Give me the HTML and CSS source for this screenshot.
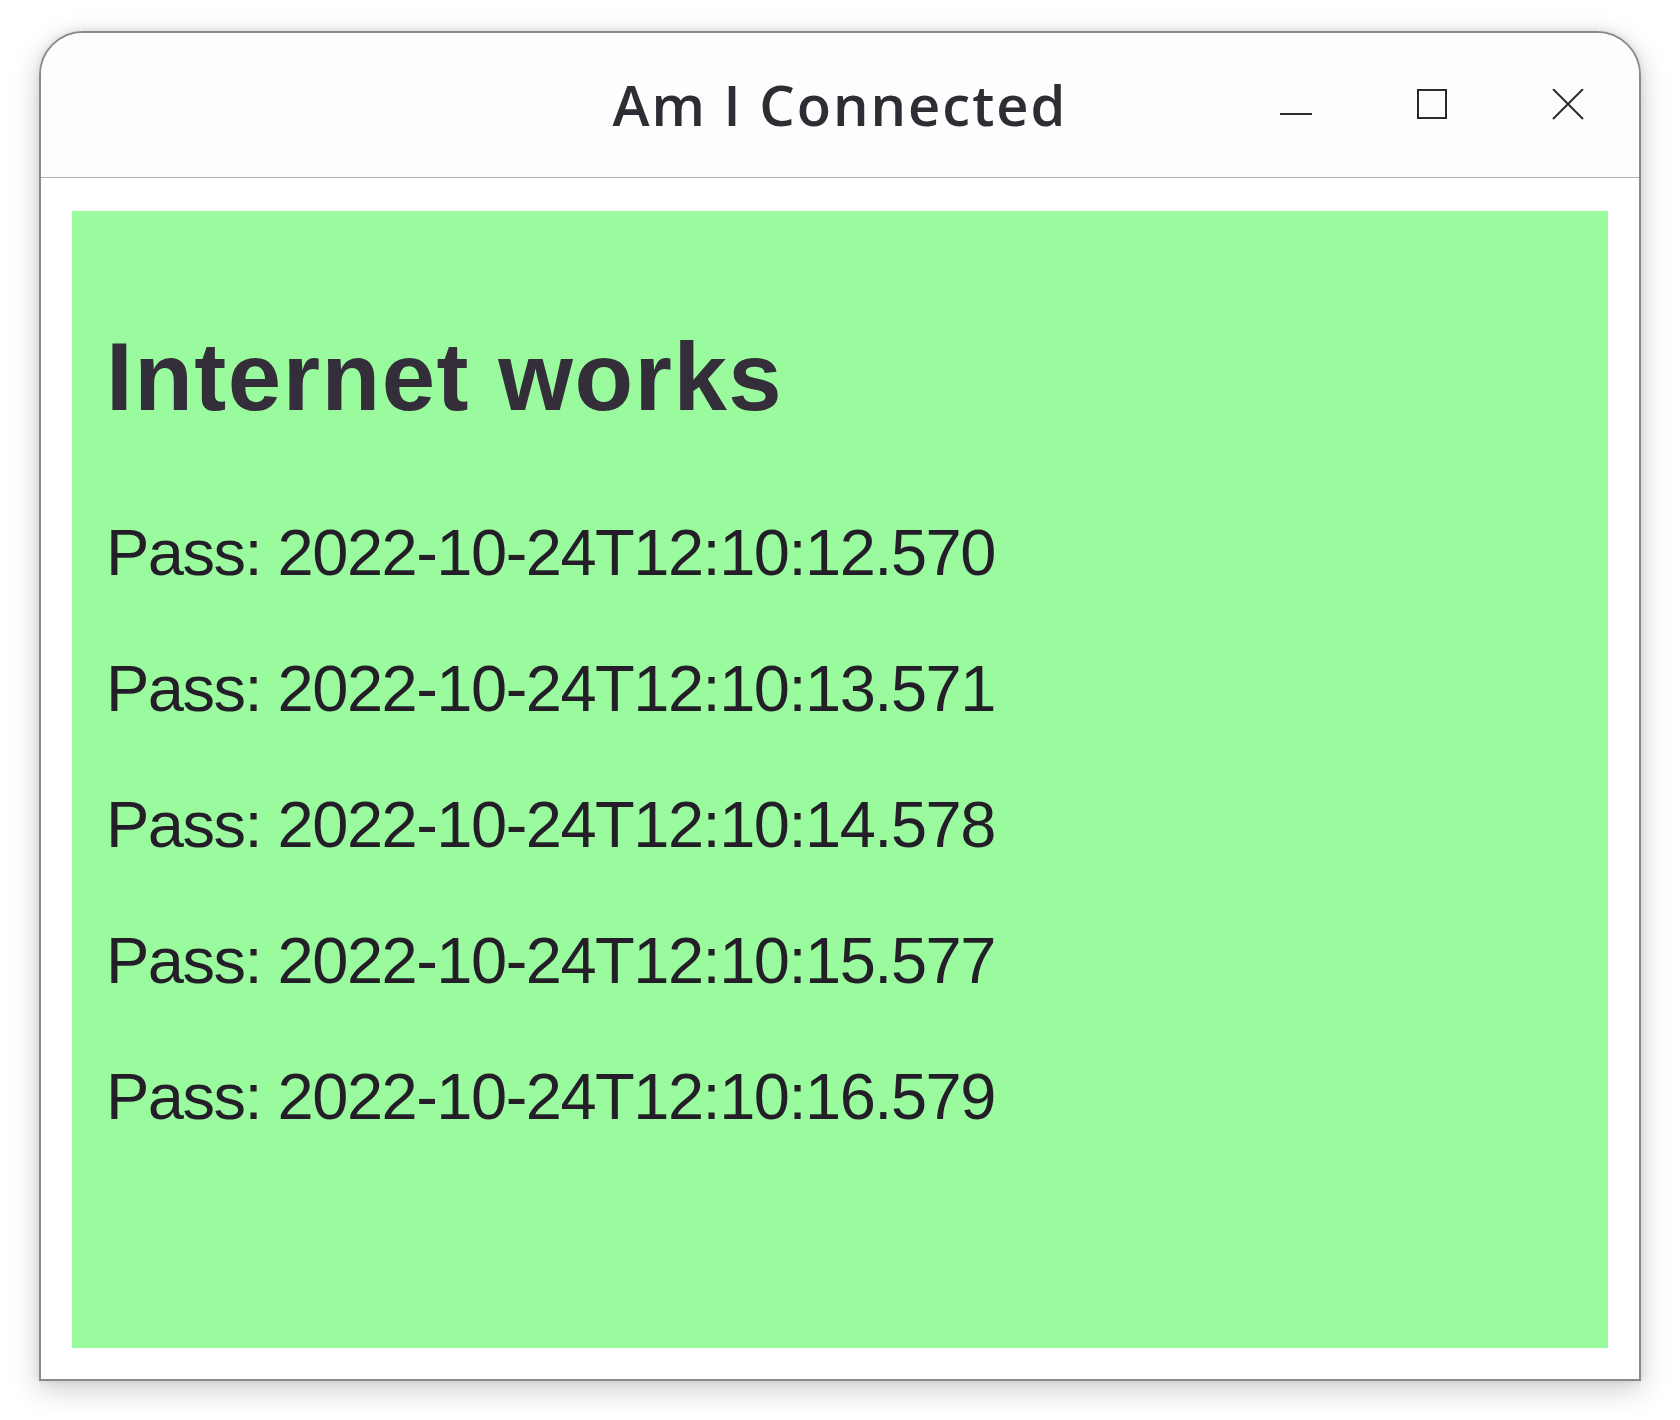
FILE: index.html
```html
<!DOCTYPE html>
<html lang="en">
<head>
<meta charset="utf-8">
<title>Am I Connected</title>
<link rel="stylesheet" href="styles.css">
</head>
<body>
<div class="window">
  <header class="titlebar">
    <div class="spacer"></div>
    <div class="title">Am I Connected</div>
    <div class="controls">
      <button class="ctl" aria-label="Minimize">
        <svg width="32" height="32" viewBox="0 0 32 32"><line x1="0" y1="25" x2="32" y2="25" stroke="#2a2a2a" stroke-width="2"/></svg>
      </button>
      <button class="ctl" aria-label="Maximize">
        <svg width="32" height="32" viewBox="0 0 32 32"><rect x="2" y="1" width="28" height="28" fill="none" stroke="#2a2a2a" stroke-width="2"/></svg>
      </button>
      <button class="ctl" aria-label="Close">
        <svg width="32" height="32" viewBox="0 0 32 32"><path d="M1 0 L31 30 M31 0 L1 30" stroke="#2a2a2a" stroke-width="2" fill="none"/></svg>
      </button>
    </div>
  </header>
  <main class="content">
    <section class="status">
      <h1 class="headline">Internet works</h1>
      <p class="entry">Pass: 2022-10-24T12:10:12.570</p>
      <p class="entry">Pass: 2022-10-24T12:10:13.571</p>
      <p class="entry">Pass: 2022-10-24T12:10:14.578</p>
      <p class="entry">Pass: 2022-10-24T12:10:15.577</p>
      <p class="entry">Pass: 2022-10-24T12:10:16.579</p>
    </section>
  </main>
</div>
</body>
</html>
```

FILE: styles.css
```css
html, body {
  margin: 0;
  padding: 0;
  background: #ffffff;
}

body {
  padding: 31px 40px 40px 39px;
  font-family: "Liberation Sans", Arial, sans-serif;
}

.window {
  width: 1602px;
  box-sizing: border-box;
  border: 2px solid #8a8a8a;
  border-radius: 44px 44px 0 0;
  background: #ffffff;
  box-shadow: 0 8px 30px rgba(0, 0, 0, 0.2), 0 0 8px rgba(0, 0, 0, 0.1);
  overflow: hidden;
}

.titlebar {
  height: 144px;
  border-bottom: 1px solid #b4b4b4;
  background: #fdfdfd;
  display: grid;
  grid-template-columns: 1fr auto 1fr;
  align-items: center;
}

.title {
  font-family: "Open Sans", "Noto Sans", sans-serif;
  font-weight: 600;
  font-size: 56px;
  letter-spacing: 2px;
  color: #2f2c33;
  line-height: 1;
  padding-bottom: 2px;
}

.controls {
  justify-self: end;
  display: flex;
  align-items: center;
  gap: 104px;
  padding-right: 55px;
}

.ctl {
  width: 32px;
  height: 32px;
  padding: 0;
  margin: 0;
  border: 0;
  background: transparent;
  display: block;
}

.ctl svg {
  display: block;
}

.content {
  padding: 33px 31px 31px 31px;
  background: #ffffff;
}

.status {
  height: 1137px;
  box-sizing: border-box;
  background: #9afb9e;
  padding: 118px 34px 0 34px;
}

.headline {
  margin: 0 0 60px 0;
  font-family: "Liberation Sans", Arial, sans-serif;
  font-weight: 700;
  font-size: 96px;
  line-height: 96px;
  letter-spacing: 1.5px;
  color: #342d3a;
}

.entry {
  margin: 0;
  font-family: "Liberation Sans", Arial, sans-serif;
  font-weight: 400;
  font-size: 65px;
  line-height: 136px;
  letter-spacing: -1.5px;
  color: #231e27;
}
```
